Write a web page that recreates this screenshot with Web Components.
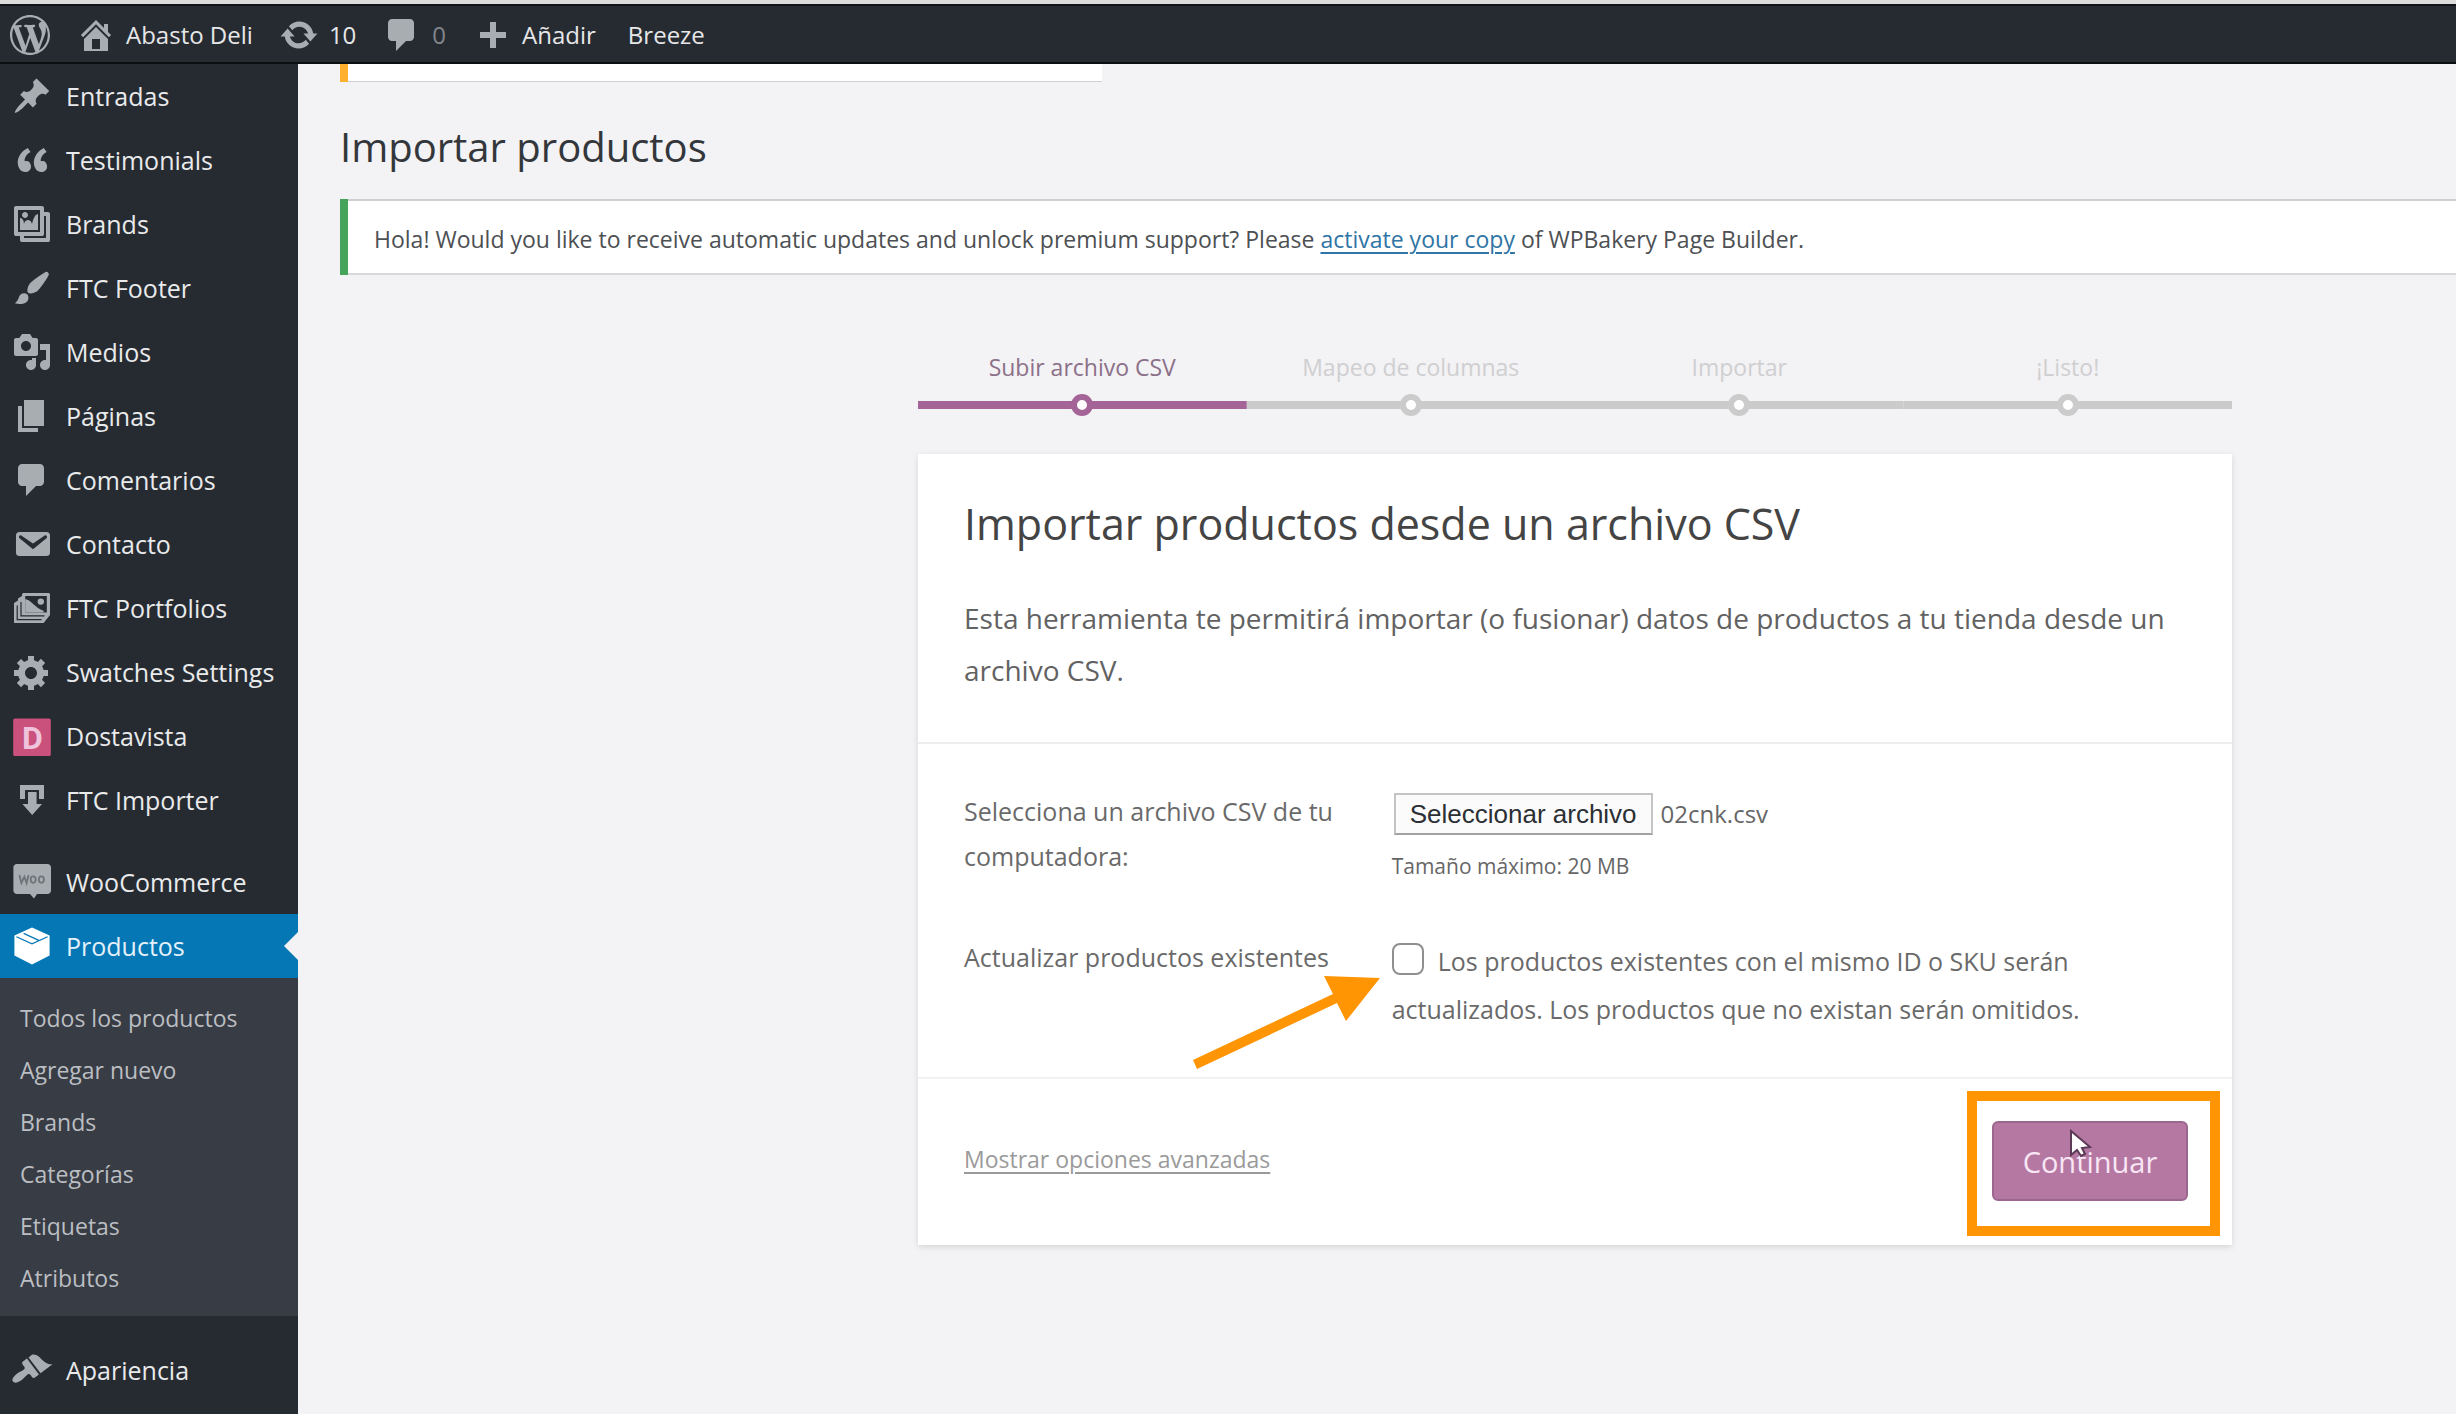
<!DOCTYPE html>
<html lang="es">
<head>
<meta charset="utf-8">
<meta name="viewport" content="width=device-width, initial-scale=1">
<title>Importar productos</title>
<style>
  :root {
    --ink: #262b32;
    --page: #f3f2f4;
    --accent: #a46497;
    --mark: #ff9502;
  }
  body {
    margin: 0;
    min-height: 100vh;
    overflow: hidden;
    background: var(--page);
    color: #555;
    font: 25px/45px "Open Sans", "Noto Sans", sans-serif;
  }
</style>
</head>
<body>
<import-page></import-page>

<script>
const ICONS = {
  wordpress: '<path d="M20 10c0-5.51-4.49-10-10-10C4.48 0 0 4.49 0 10c0 5.52 4.48 10 10 10 5.51 0 10-4.48 10-10zM7.78 15.37L4.37 6.22c.55-.02 1.17-.08 1.17-.08.5-.06.44-1.13-.06-1.11 0 0-1.45.11-2.37.11-.18 0-.37 0-.58-.01C4.12 2.69 6.87 1.11 10 1.11c2.33 0 4.45.87 6.05 2.34-.68-.11-1.65.39-1.65 1.58 0 .74.45 1.36.9 2.1.35.61.55 1.36.55 2.46 0 1.49-1.4 5-1.4 5l-3.03-8.37c.54-.02.82-.17.82-.17.5-.05.44-1.25-.06-1.22 0 0-1.44.12-2.38.12-.87 0-2.33-.12-2.33-.12-.5-.03-.56 1.2-.06 1.22l.92.08 1.26 3.41zM17.41 10c.24-.64.74-1.87.43-4.25.7 1.29 1.05 2.71 1.05 4.25 0 3.29-1.73 6.24-4.4 7.78.97-2.59 1.94-5.2 2.92-7.78zM6.1 18.09C3.12 16.65 1.11 13.53 1.11 10c0-1.3.23-2.48.72-3.59C3.25 10.3 4.67 14.2 6.1 18.09zm4.03-6.63l2.58 6.98c-.86.29-1.76.45-2.71.45-.79 0-1.57-.11-2.29-.33.81-2.38 1.62-4.74 2.42-7.1z"/>',
  home: '<path d="M16 8.5l1.53 1.53-1.06 1.06L10 4.6l-6.47 6.49-1.06-1.06L10 2.5l4 4v-2h2v4zm-6-2.46l6 5.99V18H4v-5.97zM12 17v-5H8v5h4z"/>',
  update: '<path d="M10.2 3.28c3.53 0 6.43 2.61 6.92 6h2.08l-3.5 4-3.5-4h2.32c-.45-1.97-2.21-3.45-4.32-3.45-1.45 0-2.73.71-3.54 1.78L4.95 5.66C6.23 4.2 8.11 3.28 10.2 3.28zm-.4 13.44c-3.52 0-6.43-2.61-6.92-6H.8l3.5-4c1.17 1.33 2.33 2.67 3.5 4H5.48c.45 1.97 2.21 3.45 4.32 3.45 1.45 0 2.73-.71 3.54-1.78l1.71 1.95c-1.28 1.46-3.15 2.38-5.25 2.38z"/>',
  comment: '<path d="M5 2h9c1.100 0 2 .9 2 2v7c0 1.100-.9 2-2 2h-2l-5 5v-5H5c-1.100 0-2-.9-2-2V4c0-1.100.9-2 2-2z"/>',
  plus: '<path d="M17 8.500v3h-5v5H9v-5H4v-3h5v-5h3v5h5z"/>',
  pin: '<path d="M10.44 3.02l1.82-1.82 6.36 6.35-1.83 1.82c-1.05-.68-2.48-.57-3.41.36l-.75.75c-.92.93-1.04 2.35-.35 3.41l-1.83 1.82-2.41-2.41-2.8 2.79c-.42.42-3.38 2.71-3.8 2.29s1.86-3.39 2.28-3.81l2.79-2.79L4.1 9.36l1.83-1.82c1.05.69 2.48.57 3.4-.36l.75-.75c.93-.92 1.05-2.35.36-3.41z"/>',
  quote: '<path d="M9.49 13.22c0-.74-.2-1.38-.61-1.9-.62-.78-1.83-.88-2.53-.72-.29-1.65 1.11-3.75 2.92-4.65L7.88 4c-2.73 1.3-5.42 4.28-4.96 8.05C3.21 14.43 4.59 16 6.54 16c.85 0 1.56-.25 2.12-.75s.83-1.18.83-2.03zm8.05 0c0-.74-.2-1.38-.61-1.9-.63-.78-1.83-.88-2.53-.72-.29-1.65 1.11-3.75 2.92-4.65L15.93 4c-2.73 1.3-5.41 4.28-4.95 8.05.29 2.38 1.66 3.95 3.61 3.95.85 0 1.56-.25 2.12-.75s.83-1.18.83-2.03z"/>',
  gallery: '<path d="M16 4h1.96c.57 0 1.04.47 1.04 1.04v12.92c0 .57-.47 1.04-1.04 1.04H5.04C4.47 19 4 18.53 4 17.96V16H2.04C1.47 16 1 15.53 1 14.96V2.04C1 1.47 1.47 1 2.04 1h12.92c.57 0 1.04.47 1.04 1.04V4zM3 14h11V3H3v11zm5-8.5C8 4.67 7.33 4 6.5 4S5 4.67 5 5.5 5.67 7 6.5 7 8 6.33 8 5.5zm2 4.5s1-5 3-5v8H4V7c2 0 2 3 2 3s.33-2 2-2 2 2 2 2zm7 7V6h-1v8.96c0 .57-.47 1.04-1.04 1.04H6v1h11z"/>',
  brush: '<path d="M18.33 3.57s.27-.8-.31-1.36c-.53-.52-1.22-.24-1.22-.24-.61.3-5.76 3.47-7.67 5.57-.86.96-2.06 3.79-1.09 4.82.92.98 3.96-.17 4.79-1 2.06-2.06 5.21-7.17 5.5-7.79zM1.4 17.65c2.37-1.56 1.46-3.41 3.23-4.64.93-.65 2.22-.62 3.08.29.63.67.8 2.57-.16 3.46-1.57 1.45-4 1.55-6.15.89z"/>',
  media: '<path d="M13 11V4c0-.55-.45-1-1-1h-1.67L9 1H5L3.67 3H2c-.55 0-1 .45-1 1v7c0 .55.45 1 1 1h10c.55 0 1-.45 1-1zM7 4.5c1.38 0 2.5 1.12 2.5 2.5S8.38 9.5 7 9.5 4.5 8.38 4.5 7 5.62 4.5 7 4.5zM14 6h5v10.5c0 1.38-1.12 2.5-2.5 2.5S14 17.88 14 16.5s1.12-2.5 2.5-2.5c.17 0 .34.02.5.05V9h-3V6zm-4 8.05V13h2v3.5c0 1.38-1.12 2.5-2.5 2.5S7 17.88 7 16.5 8.12 14 9.5 14c.17 0 .34.02.5.05z"/>',
  page: '<path d="M6 15V2h10v13H6zm-1 1h8v2H3V5h2v11z"/>',
  email: '<path d="M3.87 4h13.25C18.37 4 19 4.59 19 5.79v8.42c0 1.19-.63 1.79-1.88 1.79H3.87c-1.25 0-1.88-.6-1.88-1.79V5.79c0-1.2.63-1.79 1.88-1.79zm6.62 8.6l6.74-5.53c.24-.2.43-.66.13-1.07-.29-.41-.82-.42-1.17-.17l-5.7 3.86L4.8 5.83c-.35-.25-.88-.24-1.17.17-.3.41-.11.87.13 1.07z"/>',
  images: '<path fill-rule="evenodd" d="M6 2.500h12.200c.5 0 .8.300.8.800v10.200L15.800 17.500H1.500c-.3 0-.5-.2-.5-.5V7.500L3 6.200V5.200L5 4v-.700c0-.5.4-.8 1-.8zM6.600 4v8.300h10.800V4z"/><path d="M6.600 5.500c3 .5 5 4.500 9.200 5.900v.9H6.600z"/><circle cx="14.400" cy="6.800" r="1.600"/><path d="M4.500 7v6.900h11.700M2.600 8.800v7h12.200" fill="none" stroke="#262b32" stroke-width=".6"/>',
  gear: '<path d="M18 12h-2.180c-.17.7-.44 1.350-.81 1.930l1.540 1.540-2.100 2.100-1.540-1.540c-.58.36-1.230.63-1.910.79V19H8v-2.180c-.68-.16-1.330-.43-1.910-.79l-1.540 1.540-2.120-2.120 1.540-1.540c-.36-.58-.63-1.230-.79-1.910H1V9.030h2.170c.16-.7.44-1.350.8-1.940L2.430 5.550l2.100-2.100 1.540 1.540c.58-.37 1.240-.64 1.930-.81V2h3v2.180c.68.16 1.330.43 1.910.79l1.540-1.540 2.120 2.120-1.540 1.540c.36.59.64 1.240.8 1.940H18V12zm-8.500 1.500c1.660 0 3-1.340 3-3s-1.340-3-3-3-3 1.340-3 3 1.340 3 3 3z"/>',
  dostavista: '<rect x=".6" y="1.200" width="18.800" height="18.800" rx=".8" fill="#c9517b"/><text x="10.200" y="16.300" text-anchor="middle" font-family="Roboto" font-weight="700" font-size="16" fill="#f0c3dc">D</text>',
  importer: '<path d="M4 2.500h12v7h-2.500V5H6.500v4.500H4z"/><path d="M8 6h4.300v6H15l-4.900 5.500L5.200 12H8z"/>',
  woo: '<path d="M2.500 1h15.200c1 0 1.800.8 1.800 1.700v11.500c0 1-.8 1.800-1.800 1.800h-5.200L11 18.200 9 16H2.500C1.500 16 .7 15.200.7 14.200V2.700C.7 1.800 1.500 1 2.500 1z"/><path d="M3.700 6.500l1 4 1.500-3.200 1.100 3.200 1-4M10.600 7.200c1.700 0 1.700 3.200 0 3.200s-1.700-3.200 0-3.200zM14.700 7.200c1.700 0 1.700 3.200 0 3.200s-1.700-3.200 0-3.200z" fill="none" stroke="#6f7479" stroke-width=".9"/>',
  box: '<path d="M10 .8l8.800 4v10L10 19.200l-8.800-4.400v-10z"/><path d="M2.200 5.400L10 8.900l7.800-3.500M5.800 3.700l7.600 3.500" fill="none" stroke="#0577b5" stroke-width=".6"/>',
  appearance: '<path transform="rotate(8 10 10)" d="M14.480 11.060L7.410 3.990l1.500-1.500c.5-.56 2.300-.47 3.510.32 1.210.8 1.430 1.280 2.910 2.100 1.180.64 2.450 1.260 4.450.85zm-.71.71L6.700 4.700 4.930 6.470c-.39.39-.39 1.020 0 1.410l1.060 1.060c.39.39.39 1.030 0 1.420-.6.6-1.430 1.110-2.210 1.690-.35.26-.7.53-1.010.84C1.430 14.230.4 16.080 1.400 17.070c.99 1 2.840-.03 4.180-1.360.31-.31.58-.66.85-1.020.57-.78 1.080-1.610 1.690-2.210.39-.39 1.020-.39 1.410 0l1.060 1.060c.39.39 1.020.39 1.410 0z"/>'
};

/* Registers a custom element whose shadow root is filled from render(host). */
function component(tag, render) {
  customElements.define(tag, class extends HTMLElement {
    constructor() {
      super();
      this.attachShadow({ mode: 'open' });
    }
    connectedCallback() {
      const t = document.createElement('template');
      t.innerHTML = render(this);
      this.shadowRoot.replaceChildren(t.content.cloneNode(true));
      if (this.tagName === 'FILE-PICKER') this.wire();
    }
    wire() {
      const root = this.shadowRoot;
      const input = root.querySelector('input');
      root.querySelector('button').addEventListener('click', () => input.click());
      input.addEventListener('change', () => {
        if (input.files[0]) root.querySelector('output').textContent = input.files[0].name;
      });
    }
  });
}

component('wp-icon', el => `
  <style>
    :host { display: block; flex: none; width: 40px; height: 40px; color: #a8adb2; }
    svg { display: block; width: 100%; height: 100%; fill: currentColor; overflow: visible; }
  </style>
  <svg viewBox="0 0 20 20" aria-hidden="true">${ICONS[el.getAttribute('name')]}</svg>`);

component('bar-item', el => `
  <style>
    :host { display: block; }
    a { display: flex; align-items: center; gap: 10px; color: #e6e7e8; text-decoration: none; }
    :host([dim]) a { color: #81868b; }
    :host([plain]) a { padding-left: 6px; }
  </style>
  <a href="#">${el.hasAttribute('icon') ? `<wp-icon name="${el.getAttribute('icon')}"></wp-icon>` : ''}<slot></slot></a>`);

component('admin-bar', () => `
  <style>
    :host { display: block; border-top: 4px solid #dcdcdd; background: var(--ink); }
    nav {
      display: flex; align-items: center; gap: 26px;
      box-sizing: border-box; height: 60px; padding: 2px 10px 0;
      border-top: 2px solid #111417; border-bottom: 2px solid #0c0f12;
      font-size: 24px; line-height: 32px;
    }
  </style>
  <nav aria-label="Barra de herramientas">
    <bar-item icon="wordpress"></bar-item>
    <bar-item icon="home">Abasto Deli</bar-item>
    <bar-item icon="update">10</bar-item>
    <bar-item icon="comment" dim>0</bar-item>
    <bar-item icon="plus">Añadir</bar-item>
    <bar-item plain>Breeze</bar-item>
  </nav>`);

component('menu-item', el => `
  <style>
    :host { display: block; }
    a {
      display: flex; align-items: center; gap: 14px;
      height: 64px; padding-left: 12px;
      color: #e9eaeb; font-size: 25px; line-height: 32px; text-decoration: none;
      white-space: nowrap;
    }
    :host([current]) a { background: #0577b5; color: #e4f1fa; }
    :host([current]) wp-icon { color: #fff; }
    :host([current]) a::after {
      content: ""; margin-left: auto;
      border: 14px solid transparent; border-left: 0; border-right-color: var(--page);
    }
  </style>
  <a href="#"><wp-icon name="${el.getAttribute('icon')}"></wp-icon><slot></slot></a>`);

component('sub-menu', () => `
  <style>
    :host { display: block; padding: 14px 0 12px; background: #383c44; }
    ::slotted(a) {
      display: block; padding-left: 20px;
      color: #bbbec2; font-size: 23px; line-height: 52px; text-decoration: none;
    }
  </style>
  <slot></slot>`);

component('admin-menu', () => `
  <style>
    :host { display: block; background: var(--ink); }
    nav { display: flex; flex-direction: column; }
    .group { margin-top: 18px; }
    .last { margin-top: 22px; }
  </style>
  <nav aria-label="Menú principal">
    <menu-item icon="pin">Entradas</menu-item>
    <menu-item icon="quote">Testimonials</menu-item>
    <menu-item icon="gallery">Brands</menu-item>
    <menu-item icon="brush">FTC Footer</menu-item>
    <menu-item icon="media">Medios</menu-item>
    <menu-item icon="page">Páginas</menu-item>
    <menu-item icon="comment">Comentarios</menu-item>
    <menu-item icon="email">Contacto</menu-item>
    <menu-item icon="images">FTC Portfolios</menu-item>
    <menu-item icon="gear">Swatches Settings</menu-item>
    <menu-item icon="dostavista">Dostavista</menu-item>
    <menu-item icon="importer">FTC Importer</menu-item>
    <menu-item class="group" icon="woo">WooCommerce</menu-item>
    <menu-item icon="box" current>Productos</menu-item>
    <sub-menu>
      <a href="#">Todos los productos</a>
      <a href="#">Agregar nuevo</a>
      <a href="#">Brands</a>
      <a href="#">Categorías</a>
      <a href="#">Etiquetas</a>
      <a href="#">Atributos</a>
    </sub-menu>
    <menu-item class="last" icon="appearance">Apariencia</menu-item>
  </nav>`);

component('admin-notice', () => `
  <style>
    :host {
      display: block; box-sizing: border-box;
      border-left: 8px solid #46a35a; background: #fff;
      box-shadow: inset 0 2px #cfcfd1, inset 0 -2px #d8d8da;
      padding: 24px 26px 20px; color: #4d5053; font-size: 23px; line-height: 32px;
    }
    :host([warning]) {
      width: 762px; height: 18px; padding: 0;
      border-left-color: #ffb02c; box-shadow: inset 0 -1px #d0d0d2;
    }
    ::slotted(a) { color: #2f75a5; text-decoration-thickness: 2px; text-underline-offset: 4px; }
  </style>
  <slot></slot>`);

component('progress-steps', el => `
  <style>
    :host { display: block; }
    ol { display: flex; margin: 0; padding: 0; list-style: none; }
    li {
      --tone: #cbcbcc;
      flex: 1; display: flex; flex-direction: column; gap: 12px;
      color: #cfcfd1; font-size: 23px; line-height: 30px; text-align: center;
    }
    li.active { --tone: var(--accent); color: #8b7089; }
    .track {
      display: flex; justify-content: center;
      background: linear-gradient(var(--tone), var(--tone)) center / 100% 8px no-repeat;
    }
    .dot {
      box-sizing: border-box; width: 22px; height: 22px;
      border: 6px solid var(--tone); border-radius: 50%; background: #fff;
    }
  </style>
  <ol>${el.getAttribute('steps').split('|').map((s, i) => `
    <li${i ? '' : ' class="active" aria-current="step"'}><span>${s}</span><div class="track"><div class="dot"></div></div></li>`).join('')}
  </ol>`);

component('file-picker', () => `
  <style>
    :host { display: block; }
    .row { display: flex; align-items: center; gap: 8px; padding-left: 2px; }
    button {
      box-sizing: border-box; height: 42px; padding: 0 14px;
      border: 2px solid #c4c4c6; border-bottom-color: #a2a2a5; background: #fbfbfc;
      color: #2c2f33; font: 26px/36px "Liberation Sans", sans-serif;
    }
    output { font-size: 24px; line-height: 36px; color: #666; }
    small { display: block; margin-top: 14px; font-size: 21px; line-height: 34px; color: #666; }
  </style>
  <div class="row">
    <button type="button" aria-label="Seleccionar archivo CSV">Seleccionar archivo</button>
    <input type="file" accept=".csv" hidden>
    <output>02cnk.csv</output>
  </div>
  <small>Tamaño máximo: 20 MB</small>`);

component('import-card', () => `
  <style>
    :host {
      display: block; position: relative; background: #fff;
      box-shadow: 0 2px 6px rgba(0, 0, 0, .12);
    }
    header { padding: 40px 46px 46px; border-bottom: 2px solid #eeeef0; }
    h2 { margin: 0 0 38px; color: #444; font-size: 43px; line-height: 60px; font-weight: 400; }
    p { margin: 0; color: #626262; font-size: 28px; line-height: 52px; }
    form { display: block; margin: 0; }
    .fields {
      display: grid; grid-template-columns: 35% 1fr; row-gap: 52px;
      padding: 45px 46px 44px; border-bottom: 2px solid #f2f2f5; color: #6a6a6a;
    }
    .name { padding-right: 30px; }
    file-picker { padding-top: 4px; }
    .choice { padding-top: 2px; line-height: 48px; }
    input {
      appearance: none; box-sizing: border-box; width: 32px; height: 32px;
      margin: 0 14px 0 0; border: 2px solid #8f8f92; border-radius: 8px;
      background: #fff; vertical-align: -4px;
    }
    footer { display: flex; align-items: center; justify-content: space-between; padding: 42px 44px 44px 46px; }
    footer a { padding-bottom: 4px; color: #9a9a9a; font-size: 23px; text-decoration-thickness: 2px; text-underline-offset: 4px; }
    footer button {
      box-sizing: border-box; width: 196px; height: 80px; padding: 0;
      border: 2px solid #9c678f; border-radius: 6px; background: #b578a3;
      color: #f8e6f4; font: inherit; font-size: 29px;
    }
  </style>
  <header>
    <h2>Importar productos desde un archivo CSV</h2>
    <p>Esta herramienta te permitirá importar (o fusionar) datos de productos a tu tienda desde un archivo CSV.</p>
  </header>
  <form>
    <div class="fields">
      <label class="name">Selecciona un archivo CSV de tu computadora:</label>
      <file-picker></file-picker>
      <label class="name" for="update">Actualizar productos existentes</label>
      <div class="choice"><input type="checkbox" id="update"><label for="update">Los productos existentes con el mismo ID o SKU serán actualizados. Los productos que no existan serán omitidos.</label></div>
    </div>
    <footer>
      <a href="#">Mostrar opciones avanzadas</a>
      <button type="button">Continuar</button>
    </footer>
  </form>
  <slot></slot>`);

/* Callouts drawn over the card: an arrow, a frame round the button, a pointer. */
component('call-outs', () => `
  <style>
    :host { display: block; pointer-events: none; }
    svg { position: absolute; display: block; }
    .arrow { left: 270px; top: 510px; width: 200px; height: 110px; }
    .frame {
      position: absolute; right: 12px; bottom: 9px; box-sizing: border-box;
      width: 253px; height: 145px; border: 10px solid var(--mark);
    }
    .pointer { right: 139px; bottom: 86px; width: 24px; height: 30px; }
  </style>
  <svg class="arrow" viewBox="0 0 200 110" aria-hidden="true">
    <path fill="#ff9502" d="M192 14L136 12l9 18L5 96l4 9 140-66 9 18z"/>
  </svg>
  <div class="frame"></div>
  <svg class="pointer" viewBox="0 0 24 30" aria-hidden="true">
    <path d="M2 2v24l6-5 4 6 4-2-3-6 8-1z" fill="#fff" stroke="#5c3a55" stroke-width="2"/>
  </svg>`);

component('import-page', () => `
  <style>
    :host { display: flex; flex-direction: column; min-height: 100vh; }
    .body { flex: 1; display: flex; }
    admin-menu { flex: none; width: 298px; }
    main { flex: 1; min-width: 0; padding-left: 42px; overflow: hidden; }
    .content { margin-right: -354px; }
    h1 { margin: 37px 0 24px; color: #33373b; font-size: 40px; line-height: 56px; font-weight: 400; }
    .wizard { max-width: 1314px; margin: 77px auto 0; }
    progress-steps { margin-bottom: 38px; }
  </style>
  <admin-bar></admin-bar>
  <div class="body">
    <admin-menu></admin-menu>
    <main>
      <div class="content">
        <admin-notice warning></admin-notice>
        <h1>Importar productos</h1>
        <admin-notice>Hola! Would you like to receive automatic updates and unlock premium support? Please <a href="#">activate your copy</a> of WPBakery Page Builder.</admin-notice>
        <div class="wizard">
          <progress-steps steps="Subir archivo CSV|Mapeo de columnas|Importar|¡Listo!"></progress-steps>
          <import-card><call-outs></call-outs></import-card>
        </div>
      </div>
    </main>
  </div>`);
</script>
</body>
</html>
